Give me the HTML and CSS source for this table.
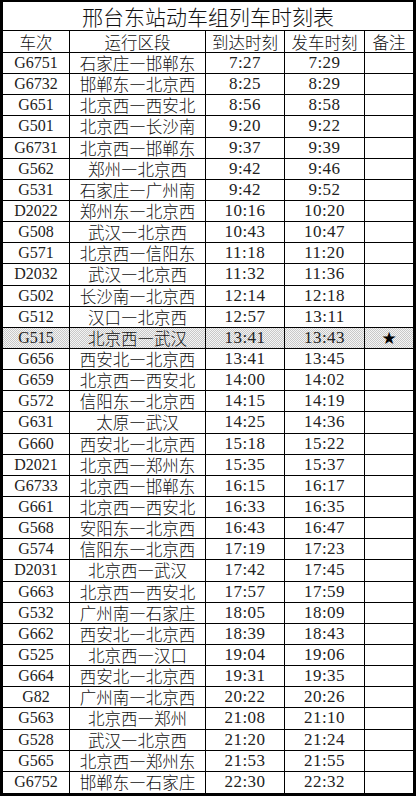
FILE: index.html
```html
<!DOCTYPE html>
<html lang="zh-CN">
<head>
<meta charset="utf-8">
<title>邢台东站动车组列车时刻表</title>
<link rel="stylesheet" href="styles.css">
</head>
<body>
<div class="sheet">
  <div class="grid">
    <div class="cell title last">邢台东站动车组列车时刻表</div>
    <div class="cell head">车次</div><div class="cell head">运行区段</div><div class="cell head">到达时刻</div><div class="cell head">发车时刻</div><div class="cell head last">备注</div>
    <div class="cell tn">G6751</div><div class="cell cn">石家庄—邯郸东</div><div class="cell num">7:27</div><div class="cell num">7:29</div><div class="cell last"></div>
    <div class="cell tn">G6732</div><div class="cell cn">邯郸东—北京西</div><div class="cell num">8:25</div><div class="cell num">8:29</div><div class="cell last"></div>
    <div class="cell tn">G651</div><div class="cell cn">北京西—西安北</div><div class="cell num">8:56</div><div class="cell num">8:58</div><div class="cell last"></div>
    <div class="cell tn">G501</div><div class="cell cn">北京西—长沙南</div><div class="cell num">9:20</div><div class="cell num">9:22</div><div class="cell last"></div>
    <div class="cell tn">G6731</div><div class="cell cn">北京西—邯郸东</div><div class="cell num">9:37</div><div class="cell num">9:39</div><div class="cell last"></div>
    <div class="cell tn">G562</div><div class="cell cn">郑州—北京西</div><div class="cell num">9:42</div><div class="cell num">9:46</div><div class="cell last"></div>
    <div class="cell tn">G531</div><div class="cell cn">石家庄—广州南</div><div class="cell num">9:42</div><div class="cell num">9:52</div><div class="cell last"></div>
    <div class="cell tn">D2022</div><div class="cell cn">郑州东—北京西</div><div class="cell num">10:16</div><div class="cell num">10:20</div><div class="cell last"></div>
    <div class="cell tn">G508</div><div class="cell cn">武汉—北京西</div><div class="cell num">10:43</div><div class="cell num">10:47</div><div class="cell last"></div>
    <div class="cell tn">G571</div><div class="cell cn">北京西—信阳东</div><div class="cell num">11:18</div><div class="cell num">11:20</div><div class="cell last"></div>
    <div class="cell tn">D2032</div><div class="cell cn">武汉—北京西</div><div class="cell num">11:32</div><div class="cell num">11:36</div><div class="cell last"></div>
    <div class="cell tn">G502</div><div class="cell cn">长沙南—北京西</div><div class="cell num">12:14</div><div class="cell num">12:18</div><div class="cell last"></div>
    <div class="cell tn">G512</div><div class="cell cn">汉口—北京西</div><div class="cell num">12:57</div><div class="cell num">13:11</div><div class="cell last"></div>
    <div class="cell tn hl">G515</div><div class="cell cn hl">北京西—武汉</div><div class="cell num hl">13:41</div><div class="cell num hl">13:43</div><div class="cell last star">★</div>
    <div class="cell tn">G656</div><div class="cell cn">西安北—北京西</div><div class="cell num">13:41</div><div class="cell num">13:45</div><div class="cell last"></div>
    <div class="cell tn">G659</div><div class="cell cn">北京西—西安北</div><div class="cell num">14:00</div><div class="cell num">14:02</div><div class="cell last"></div>
    <div class="cell tn">G572</div><div class="cell cn">信阳东—北京西</div><div class="cell num">14:15</div><div class="cell num">14:19</div><div class="cell last"></div>
    <div class="cell tn">G631</div><div class="cell cn">太原—武汉</div><div class="cell num">14:25</div><div class="cell num">14:36</div><div class="cell last"></div>
    <div class="cell tn">G660</div><div class="cell cn">西安北—北京西</div><div class="cell num">15:18</div><div class="cell num">15:22</div><div class="cell last"></div>
    <div class="cell tn">D2021</div><div class="cell cn">北京西—郑州东</div><div class="cell num">15:35</div><div class="cell num">15:37</div><div class="cell last"></div>
    <div class="cell tn">G6733</div><div class="cell cn">北京西—邯郸东</div><div class="cell num">16:15</div><div class="cell num">16:17</div><div class="cell last"></div>
    <div class="cell tn">G661</div><div class="cell cn">北京西—西安北</div><div class="cell num">16:33</div><div class="cell num">16:35</div><div class="cell last"></div>
    <div class="cell tn">G568</div><div class="cell cn">安阳东—北京西</div><div class="cell num">16:43</div><div class="cell num">16:47</div><div class="cell last"></div>
    <div class="cell tn">G574</div><div class="cell cn">信阳东—北京西</div><div class="cell num">17:19</div><div class="cell num">17:23</div><div class="cell last"></div>
    <div class="cell tn">D2031</div><div class="cell cn">北京西—武汉</div><div class="cell num">17:42</div><div class="cell num">17:45</div><div class="cell last"></div>
    <div class="cell tn">G663</div><div class="cell cn">北京西—西安北</div><div class="cell num">17:57</div><div class="cell num">17:59</div><div class="cell last"></div>
    <div class="cell tn">G532</div><div class="cell cn">广州南—石家庄</div><div class="cell num">18:05</div><div class="cell num">18:09</div><div class="cell last"></div>
    <div class="cell tn">G662</div><div class="cell cn">西安北—北京西</div><div class="cell num">18:39</div><div class="cell num">18:43</div><div class="cell last"></div>
    <div class="cell tn">G525</div><div class="cell cn">北京西—汉口</div><div class="cell num">19:04</div><div class="cell num">19:06</div><div class="cell last"></div>
    <div class="cell tn">G664</div><div class="cell cn">西安北—北京西</div><div class="cell num">19:31</div><div class="cell num">19:35</div><div class="cell last"></div>
    <div class="cell tn">G82</div><div class="cell cn">广州南—北京西</div><div class="cell num">20:22</div><div class="cell num">20:26</div><div class="cell last"></div>
    <div class="cell tn">G563</div><div class="cell cn">北京西—郑州</div><div class="cell num">21:08</div><div class="cell num">21:10</div><div class="cell last"></div>
    <div class="cell tn">G528</div><div class="cell cn">武汉—北京西</div><div class="cell num">21:20</div><div class="cell num">21:24</div><div class="cell last"></div>
    <div class="cell tn">G565</div><div class="cell cn">北京西—郑州东</div><div class="cell num">21:53</div><div class="cell num">21:55</div><div class="cell last"></div>
    <div class="cell tn end">G6752</div><div class="cell cn end">邯郸东—石家庄</div><div class="cell num end">22:30</div><div class="cell num end">22:32</div><div class="cell last end"></div>
  </div>
</div>
</body>
</html>
```

FILE: styles.css
```css
html, body {
  margin: 0;
  padding: 0;
  background: #fff;
}
body {
  width: 417px;
  height: 800px;
  color: #111;
  font-family: "Liberation Serif", "Noto Sans CJK SC", serif;
}
.sheet {
  box-sizing: border-box;
  width: 416px;
  height: 796px;
  border: 3px solid #000;
  border-top-width: 2px;
}
.grid {
  display: grid;
  grid-template-columns: 67px 136px 79px 80px 48px;
  grid-template-rows: 29px 22px repeat(35, 1fr);
  height: 100%;
}
.cell {
  box-sizing: border-box;
  min-height: 0;
  border-right: 1px solid #000;
  border-bottom: 1px solid #000;
  display: flex;
  align-items: center;
  justify-content: center;
  white-space: nowrap;
  font-size: 17px;
  line-height: 20px;
}
.cell.last {
  border-right: none;
}
.cell.end {
  border-bottom: none;
}
.title {
  grid-column: 1 / 6;
  font-family: "Noto Sans CJK SC", sans-serif;
  font-weight: 300;
  font-size: 21px;
  line-height: 26px;
}
.head, .cn {
  font-family: "Noto Sans CJK SC", sans-serif;
  font-weight: 300;
  font-size: 16.5px;
  line-height: 20px;
}
.tn {
  font-family: "Liberation Serif", serif;
  font-size: 16px;
  color: #222;
}
.num {
  font-family: "Liberation Serif", serif;
  font-size: 17px;
  letter-spacing: 0.5px;
  color: #222;
}
.hl, .star {
  background-color: #e4e4e4;
  background-image: repeating-conic-gradient(#c8c8c8 0 25%, #f4f4f4 0 50%);
  background-size: 2px 2px;
}
.star {
  font-family: "DejaVu Sans", sans-serif;
  font-size: 17px;
  color: #000;
}
```
